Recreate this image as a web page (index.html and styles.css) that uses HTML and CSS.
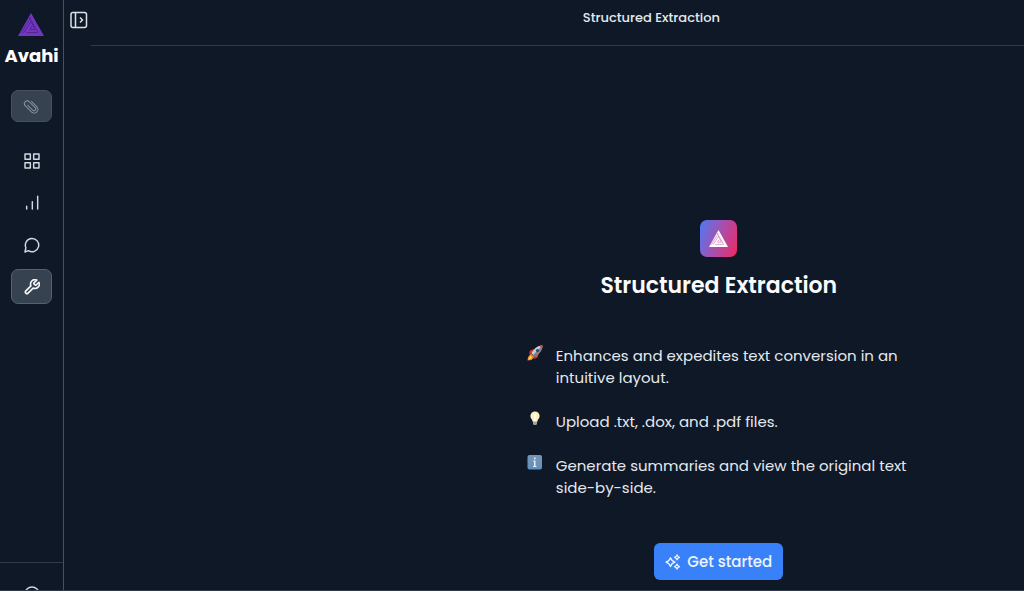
FILE: index.html
```html
<!DOCTYPE html>
<html lang="en">
<head>
<meta charset="utf-8">
<meta name="viewport" content="width=device-width, initial-scale=1">
<title>Structured Extraction</title>
<link rel="stylesheet" href="styles.css">
</head>
<body>
<svg class="defs" width="0" height="0" aria-hidden="true">
  <symbol id="logo" viewBox="0 0 26 23">
    <path class="logo-fill" d="M13 0L26 23H0Z"/>
    <path class="logo-gap" d="M11 3.500L20 19.500H8.500M3 20L12.800 4.500M5.500 20L13 8.500L17 16.500H12L13.500 13"/>
  </symbol>
</svg>
<div class="app">
  <aside class="sidebar">
    <a class="brand" href="#">
      <svg class="brand-logo" aria-hidden="true"><use href="#logo"/></svg>
      <span>Avahi</span>
    </a>
    <button class="attach" aria-label="Attach file">
      <svg class="clip" viewBox="0 0 24 24" aria-hidden="true"><g transform="rotate(-45 12 12)"><path d="M9.500 7v10a2.500 2.500 0 0 0 5 0V5a4 4 0 0 0-8 0v12.500a5 5 0 0 0 10.500 0V7"/></g></svg>
    </button>
    <nav class="nav" aria-label="Main">
      <a href="#" aria-label="Dashboard"><svg class="icon" viewBox="0 0 24 24"><path d="M1.500 1.500h8v8h-8zM14.500 1.500h8v8h-8zM1.500 14.500h8v8h-8zM14.500 14.500h8v8h-8z"/></svg></a>
      <a href="#" aria-label="Analytics"><svg class="icon" viewBox="0 0 24 24"><path d="M4 21v-4M12.500 21V10M20.500 21V2"/></svg></a>
      <a href="#" aria-label="Chat"><svg class="icon" viewBox="0 0 24 24"><path d="M6.500 20.500A10 10 0 1 0 2.800 16L1.500 22.500z"/></svg></a>
      <a class="active" href="#" aria-label="Tools"><svg class="icon" viewBox="0 0 24 24"><path d="M14.700 6.300a1 1 0 0 0 0 1.400l1.600 1.600a1 1 0 0 0 1.400 0l3.770-3.770a6 6 0 0 1-7.940 7.940l-6.910 6.910a2.120 2.120 0 0 1-3-3l6.910-6.910a6 6 0 0 1 7.940-7.940z" transform="translate(-1.200 -1.200) scale(1.100)"/></svg></a>
    </nav>
    <div class="account">
      <a href="#" aria-label="Account"><svg class="icon" viewBox="0 0 24 24"><circle cx="12" cy="12" r="10.500"/></svg></a>
    </div>
  </aside>
  <main class="main">
    <header class="topbar">
      <button class="toggle" aria-label="Expand sidebar">
        <svg viewBox="0 0 18 18" aria-hidden="true"><rect x="1" y="1.500" width="15.500" height="15" rx="2"/><path d="M5.500 1.500v15M10 6.500L12.500 9 10 11.500"/></svg>
      </button>
      <div class="topbar-title">Structured Extraction</div>
    </header>
    <section class="intro">
      <div class="badge"><svg class="badge-logo" aria-hidden="true"><use href="#logo"/></svg></div>
      <h1>Structured Extraction</h1>
      <ul class="features">
        <li>
          <svg class="emoji" viewBox="0 0 16 16" aria-hidden="true">
            <path fill="#d73832" d="M7 4L3 5.500 2 9l4-1zM12 8l-1.500 4.500L7 14l1-4z"/>
            <path fill="#c8ced8" d="M15.500.5C11 .5 7 3 4.500 8.500L7.500 11.500C12.500 9 15.500 5 15.500.5z"/>
            <path fill="#79808d" d="M15.500.5C15.500 5 12.500 9 7.500 11.500L6 10z"/>
            <path fill="#db4038" d="M15.500.5l-3 .6L15 3.500z"/>
            <circle cx="10.500" cy="5.500" r="1.600" fill="#294967"/>
            <path fill="#ef812d" d="M4 8.500L1 12 .5 15.500 4.500 15 7.500 12z"/>
            <path fill="#ffe260" d="M3.500 10.500L1 15l4-2z"/>
          </svg>
          <span>Enhances and expedites text conversion in an intuitive layout.</span>
        </li>
        <li>
          <svg class="emoji" viewBox="0 0 16 16" aria-hidden="true">
            <path fill="#fff0bd" d="M8 .5a4.600 4.600 0 0 0-4.600 4.600C3.400 7.800 5.500 8.500 5.800 11h4.400c.3-2.500 2.400-3.200 2.400-5.900A4.600 4.600 0 0 0 8 .5z"/>
            <path fill="#fffdf0" d="M7 3h2v7.500H7z"/>
            <path fill="#a2a29b" d="M6 10.500h4v2.700L9 14H7l-1-.8z"/>
          </svg>
          <span>Upload .txt, .dox, and .pdf files.</span>
        </li>
        <li>
          <svg class="emoji" viewBox="0 0 16 16" aria-hidden="true">
            <defs><linearGradient id="info" x2="0" y2="1"><stop stop-color="#7895b4"/><stop offset="1" stop-color="#5f91bd"/></linearGradient></defs>
            <rect x=".5" y="0" width="14.500" height="14.500" rx="2" fill="url(#info)"/>
            <path fill="#e5edf5" d="M7 2.500h1.600v1.700H7zM6.200 5.500h2.300V11h1v1H6v-1h1V6.500h-.8z"/>
          </svg>
          <span>Generate summaries and view the original text side-by-side.</span>
        </li>
      </ul>
      <button class="start">
        <svg viewBox="0 0 16 16" aria-hidden="true"><path d="M5.500 3.800Q6.500 7 10 8.200 6.500 9.400 5.500 12.600 4.500 9.400 1 8.200 4.500 7 5.500 3.800zM12 .8Q12.500 2.700 14.500 3.300 12.500 3.900 12 5.800 11.500 3.900 9.500 3.300 11.500 2.700 12 .8zM12 10.200Q12.500 12.100 14.500 12.700 12.500 13.300 12 15.200 11.500 13.300 9.500 12.700 11.500 12.100 12 10.200z"/></svg>
        <span>Get started</span>
      </button>
    </section>
  </main>
</div>
</body>
</html>
```
FILE: styles.css
```css
* { box-sizing: border-box; }
body {
  margin: 0;
  background: #0f1826;
  color: #e4e9f0;
  font-family: Poppins, Inter, sans-serif;
}
.defs { position: absolute; }
button { font: inherit; color: inherit; cursor: pointer; }
svg { display: block; flex: none; }
.logo-fill { fill: currentColor; }
.logo-gap { fill: none; stroke: var(--gap); stroke-width: 1; }

.app {
  display: flex;
  height: 100vh;
  overflow: hidden;
  border-bottom: 1px solid #303a48;
}
.sidebar {
  display: flex;
  flex: none;
  flex-direction: column;
  align-items: center;
  width: 64px;
  padding-top: 13px;
  border-right: 1px solid #465160;
}
.brand {
  display: flex;
  flex-direction: column;
  align-items: center;
  gap: 6px;
  color: #fff;
  font-size: 18px;
  font-weight: 700;
  line-height: 28px;
  text-decoration: none;
}
.brand-logo { width: 26px; height: 23px; color: #7436c2; --gap: #4d2890; }
.attach {
  display: grid;
  place-items: center;
  width: 41px;
  height: 32px;
  margin-top: 20px;
  padding: 0;
  border: 1px solid #465160;
  border-radius: 7px;
  background: #364250;
}
.clip { width: 17px; height: 17px; fill: none; stroke: #939ca6; stroke-width: 1.4; stroke-linecap: round; }
.nav { display: flex; flex-direction: column; gap: 7px; margin-top: 21px; }
.nav a {
  display: grid;
  place-items: center;
  width: 41px;
  height: 35px;
  border: 1px solid transparent;
  border-radius: 7px;
  color: #d2d8e0;
}
.nav .active { background: #364250; border-color: #566170; color: #f5f7fa; }
.icon {
  width: 16px;
  height: 16px;
  fill: none;
  stroke: currentColor;
  stroke-width: 2.2;
  stroke-linecap: round;
  stroke-linejoin: round;
}
.account {
  display: flex;
  justify-content: center;
  width: 100%;
  height: 28px;
  margin-top: auto;
  padding-top: 23px;
  border-top: 1px solid #303a48;
  overflow: hidden;
}
.account a { color: #cbd3dd; }

.main { flex: 1; min-width: 0; }
.topbar {
  display: flex;
  height: 46px;
  padding: 11px 0 0 6px;
  background: linear-gradient(#2f3947, #2f3947) 27px 100% / 100% 1px no-repeat;
}
.toggle { height: 18px; padding: 0; border: 0; background: none; }
.toggle svg { width: 18px; height: 18px; fill: none; stroke: #dce1e8; stroke-width: 1.5; }
.topbar-title {
  flex: 1;
  margin-left: 20%;
  font-size: 13px;
  font-weight: 500;
  line-height: 14px;
  text-align: center;
}
.intro {
  display: flex;
  flex-direction: column;
  align-items: center;
  margin-left: 36%;
  padding: 174px 16px 0 20px;
}
.badge {
  display: grid;
  place-items: center;
  width: 37px;
  height: 37px;
  border-radius: 7px;
  background: linear-gradient(110deg, #4b7bf5, #a84fae 50%, #f02861);
}
.badge-logo { width: 19px; height: 17px; color: #fff; --gap: #d287bd; }
h1 {
  margin: 13px 0 0;
  color: #fafbfd;
  font-size: 22px;
  font-weight: 600;
  line-height: 32px;
}
.features {
  display: grid;
  gap: 22px;
  width: 100%;
  max-width: 384px;
  margin: 43px 0 0;
  padding: 0;
  list-style: none;
  font-size: 15px;
  line-height: 22px;
}
.features li { display: flex; gap: 13px; }
.emoji { width: 16px; height: 16px; }
.start {
  display: flex;
  align-items: center;
  gap: 6px;
  height: 37px;
  margin-top: 44px;
  padding: 0 11px;
  border: 0;
  border-radius: 6px;
  background: #3981f9;
  color: #edf4ff;
  font-size: 15px;
  font-weight: 500;
}
.start svg { width: 16px; height: 16px; fill: none; stroke: currentColor; stroke-width: 1.3; stroke-linejoin: round; }
```
